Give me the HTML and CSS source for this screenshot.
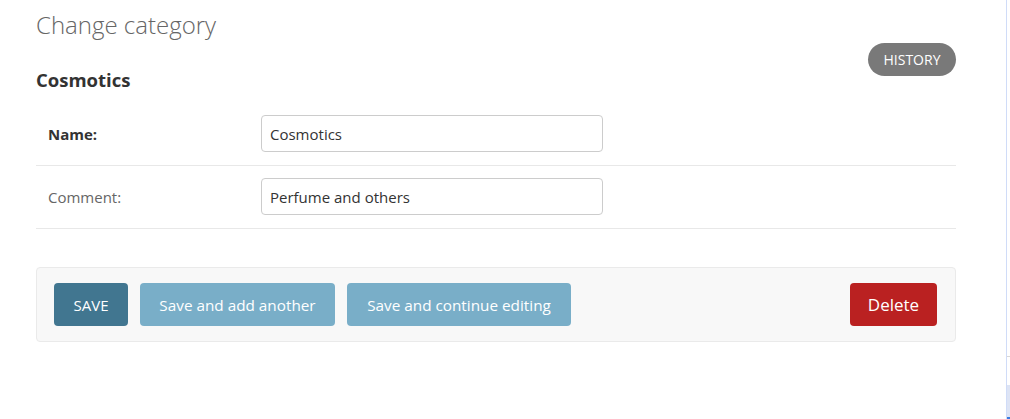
FILE: index.html
```html
<!DOCTYPE html>
<html lang="en">
<head>
<meta charset="utf-8">
<title>Change category</title>
<link rel="stylesheet" href="styles.css">
</head>
<body>
<div class="page">
  <main class="main">
    <h1 class="title">Change category</h1>
    <div class="head-row">
      <h2 class="object-name">Cosmotics</h2>
      <a class="history" href="#">HISTORY</a>
    </div>
    <form class="form">
      <div class="form-row">
        <label class="label required">Name:</label>
        <input class="field" type="text" value="Cosmotics">
      </div>
      <div class="form-row">
        <label class="label">Comment:</label>
        <input class="field" type="text" value="Perfume and others">
      </div>
      <div class="submit-row">
        <button class="btn btn-save" type="button">SAVE</button>
        <button class="btn btn-alt btn-add" type="button">Save and add another</button>
        <button class="btn btn-alt btn-continue" type="button">Save and continue editing</button>
        <span class="spacer"></span>
        <button class="btn btn-delete" type="button">Delete</button>
      </div>
    </form>
  </main>
  <div class="edge">
    <div class="edge-tick"></div>
    <div class="edge-fill"></div>
  </div>
</div>
</body>
</html>
```
FILE: styles.css
```css
* { box-sizing: border-box; }
html, body { margin: 0; padding: 0; height: 100%; background: #fff; }
body { font-family: "Open Sans", "Noto Sans", sans-serif; color: #333; }
.page { display: flex; height: 419px; }
.main { flex: 1; padding: 8px 50px 0 36px; }
.title {
  margin: 0;
  font-weight: 300;
  font-size: 24px;
  line-height: 34px;
  color: #666;
}
.head-row {
  display: flex;
  justify-content: space-between;
  align-items: flex-start;
  margin-top: 1px;
}
.object-name {
  margin: 25px 0 0;
  font-size: 18.5px;
  font-weight: 700;
  line-height: 24px;
  color: #333;
}
.history {
  display: inline-flex;
  align-items: center;
  justify-content: center;
  width: 88px;
  height: 33px;
  border-radius: 17px;
  background: #797979;
  color: #fff;
  font-size: 14px;
  text-decoration: none;
}
.form { margin-top: 11px; }
.form-row {
  display: flex;
  align-items: center;
  padding: 12px 0 13px 12px;
  border-bottom: 1px solid #e8e8e8;
}
.label {
  width: 213px;
  font-size: 15px;
  color: #666;
}
.label.required { font-weight: 700; color: #333; }
.field {
  width: 342px;
  height: 37px;
  border: 1px solid #ccc;
  border-radius: 4px;
  padding: 0 8px;
  font-family: inherit;
  font-size: 15px;
  color: #333;
}
.submit-row {
  display: flex;
  align-items: center;
  gap: 12px;
  margin-top: 38px;
  padding: 15px 18px 15px 17px;
  background: #f8f8f8;
  border: 1px solid #eaeaea;
  border-radius: 4px;
}
.spacer { flex: 1; }
.btn {
  height: 43px;
  border: 0;
  border-radius: 4px;
  padding: 0;
  color: #fff;
  font-family: inherit;
  font-size: 15.3px;
  text-align: center;
}
.btn-save { background: #417690; width: 74px; font-size: 15px; }
.btn-alt { background: #79aec8; }
.btn-add { width: 195px; }
.btn-continue { width: 224px; }
.btn-delete { background: #ba2121; font-size: 17px; width: 87px; }
.edge {
  width: 4px;
  border-left: 1px solid #d0dcf8;
  display: flex;
  flex-direction: column;
}
.edge-tick { height: 1px; margin-top: 356px; background: #d8d8d8; }
.edge-fill { margin-top: 28px; flex: 1; background: #dde4f5; border-bottom: 2px solid #3b7be0; }
```
